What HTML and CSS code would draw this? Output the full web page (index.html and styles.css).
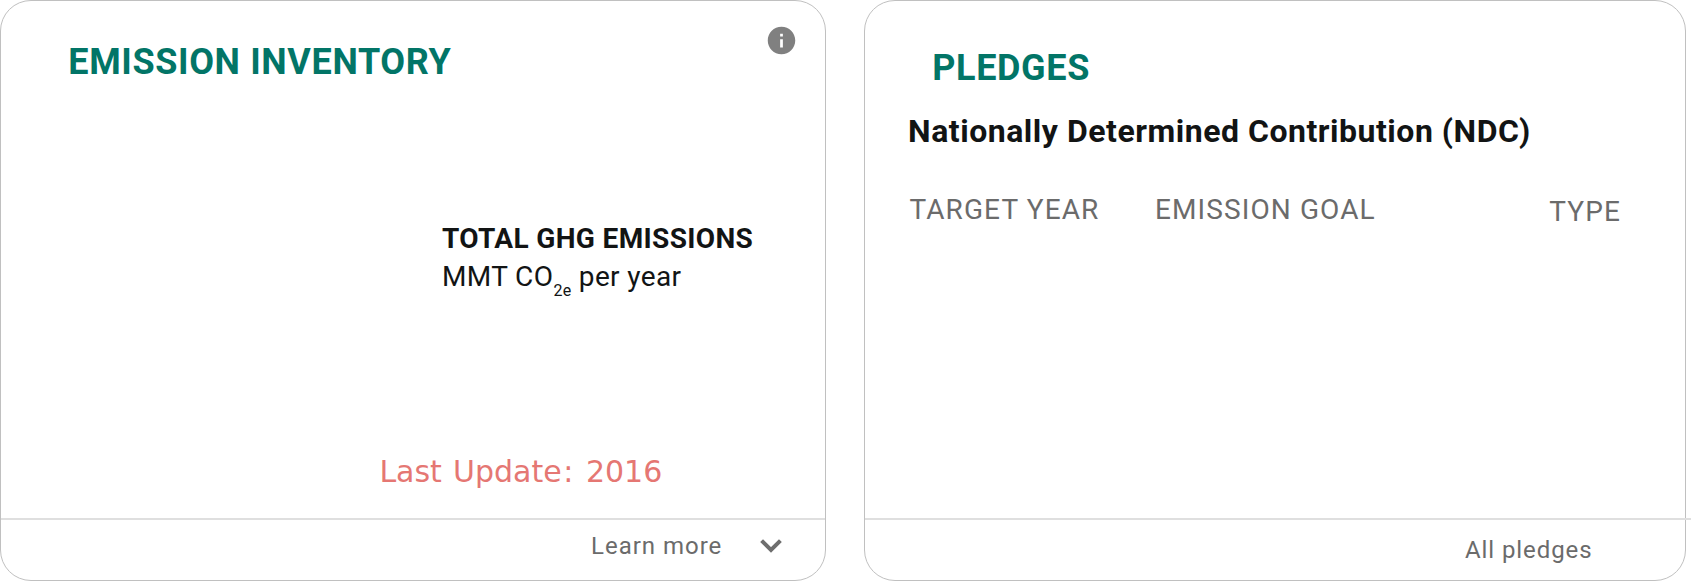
FILE: index.html
```html
<!DOCTYPE html>
<html lang="en">
<head>
<meta charset="utf-8">
<title>Emission inventory and pledges</title>
<link rel="stylesheet" href="styles.css">
</head>
<body>
<main class="cards">
  <section class="card inventory">
    <div class="card-body">
      <header class="card-head">
        <h2 class="title">EMISSION INVENTORY</h2>
        <svg class="info" viewBox="0 0 24 24" aria-label="Info"><path d="M12 2C6.48 2 2 6.48 2 12s4.48 10 10 10 10-4.48 10-10S17.52 2 12 2zm1 15h-2v-6h2v6zm0-8h-2V7h2v2z"/></svg>
      </header>
      <div class="emissions">
        <p class="total">TOTAL GHG EMISSIONS</p>
        <p class="unit">MMT CO<sub class="sub">2e</sub> per year</p>
      </div>
      <p class="updated">Last Update<span class="colon">:</span> 2016</p>
    </div>
    <footer class="card-foot">
      <span class="link">Learn more</span>
      <svg class="chevron" viewBox="0 0 22 14" aria-hidden="true"><path d="M1.6 1.6 11 11 20.4 1.6"/></svg>
    </footer>
  </section>
  <section class="card pledges">
    <div class="card-body">
      <h2 class="title">PLEDGES</h2>
      <h3 class="ndc">Nationally Determined Contribution (NDC)</h3>
      <div class="columns">
        <span>TARGET YEAR</span>
        <span>EMISSION GOAL</span>
        <span class="type">TYPE</span>
      </div>
    </div>
    <footer class="card-foot">
      <span class="link">All pledges</span>
    </footer>
  </section>
</main>
</body>
</html>
```
FILE: styles.css
```css
* { box-sizing: border-box; }
body {
  margin: 0;
  background: #fff;
  color: #121414;
  font-family: Roboto, sans-serif;
  overflow: hidden;
}
h2, h3, p { margin: 0; white-space: nowrap; }
.cards { display: flex; gap: 38px; width: 1691px; }
.card {
  display: flex;
  flex-direction: column;
  flex: none;
  height: 581px;
  border: 1px solid #c0c0c0;
  border-radius: 31px;
}
.inventory { width: 826px; }
.pledges { width: 822px; }
.card-body { display: flow-root; height: 517px; }
.title {
  font-size: 36px;
  line-height: 42px;
  font-weight: 700;
  letter-spacing: 0.62px;
  color: #027567;
}
.card-head {
  display: flex;
  justify-content: space-between;
  align-items: flex-start;
  height: 82px;
  padding: 23px 27px 0 67.3px;
}
.card-head .title { margin-top: 17px; }
.info { width: 33px; height: 33px; fill: #808080; }
.emissions { padding: 139px 0 0 441px; }
.total {
  font-size: 28px;
  line-height: 33px;
  font-weight: 700;
  letter-spacing: 0.35px;
}
.unit {
  margin-top: 5px;
  height: 33px;
  font-size: 28px;
  line-height: 33px;
  letter-spacing: 0.38px;
}
.sub {
  font-size: 16px;
  line-height: 0;
  vertical-align: -10px;
  letter-spacing: 0.3px;
}
.updated {
  margin: 161px 0 0 378.4px;
  font-family: "DejaVu Sans", sans-serif;
  font-size: 30px;
  line-height: 35px;
  word-spacing: 1.6px;
  color: #e57773;
}
.colon { padding: 0 1.5px; }
.card-foot {
  display: flex;
  justify-content: flex-end;
  align-items: flex-start;
  border-top: 2px solid #dfdfdf;
  padding: 12px 42.7px 0 0;
  color: #6b6b6b;
}
.link {
  font-size: 24px;
  line-height: 28px;
  letter-spacing: 0.98px;
}
.chevron {
  width: 22px;
  height: 14px;
  margin: 7px 0 0 38px;
  fill: none;
  stroke: #6e6e6e;
  stroke-width: 4;
}
.pledges .title { margin: 46px 0 0 67.2px; letter-spacing: 0.65px; }
.ndc {
  margin: 23px 0 0 43.1px;
  font-size: 32px;
  line-height: 38px;
  font-weight: 700;
  letter-spacing: 0.52px;
}
.columns {
  display: flex;
  margin: 43px 64px 0 44.5px;
  font-size: 28px;
  line-height: 33px;
  letter-spacing: 1.1px;
  color: #6b6b6b;
}
.columns span + span { margin-left: 55.6px; }
.columns .type { margin: 2px 0 0 auto; }
.pledges .card-foot { width: 826px; padding: 16px 98.5px 0 0; }
.pledges .link { letter-spacing: 0.92px; }
```
